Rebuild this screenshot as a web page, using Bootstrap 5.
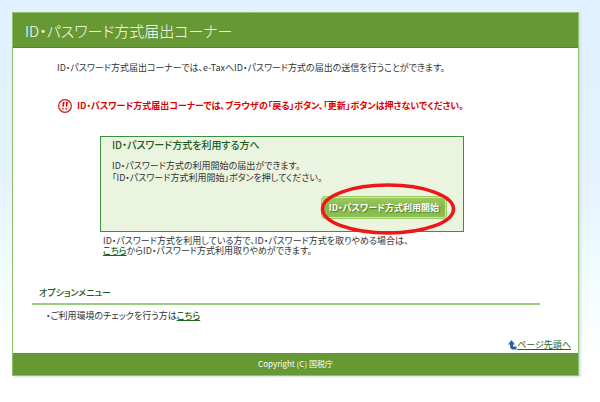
<!DOCTYPE html>
<html lang="ja">
<head>
<meta charset="utf-8">
<meta name="viewport" content="width=device-width, initial-scale=1">
<title>ID・パスワード方式届出コーナー</title>
<link href="https://cdn.jsdelivr.net/npm/bootstrap@5.3.0/dist/css/bootstrap.min.css" rel="stylesheet">
<style>
body {
  font-family: "Noto Sans CJK JP", sans-serif;
  font-feature-settings: "palt";
  font-size: 9px;
  line-height: 12px;
  color: #333;
  background: linear-gradient(#e1f1ff, #e4f3ff 180px, #f0fcff 270px, #fff 360px) no-repeat #fff;
}
.sheet { margin: 12px 21px 24px 12px; border: 1px solid #8fc16c; box-shadow: 2px 1px 2px #d8dfee; }
.title-bar { background: #693; border-bottom: 1px solid #4f8f1f; padding: 8px 12px 6px; }
.title-bar h1 { font-size: 15px; line-height: 20px; font-weight: 300; }
.intro { padding: 14px 0 0 44px; }
.notice { padding: 24px 0 0 44px; color: #d00; font-weight: 700; }
.notice-icon { width: 16px; height: 16px; }
.guide { margin: 22px 114px 0 87px; }
.panel-green { background: #eaf4df; border: 1px solid #3c9141; padding: 1px 16px 12px 11px; }
.panel-green h2 { font-size: 10px; line-height: 14px; font-weight: 500; color: #1c5c1f; }
.start-wrap { margin-top: 12px; }
.start { font-size: 9px; line-height: 15px; font-weight: 700; font-feature-settings: inherit; color: #fff; padding: 3px 7px; border: 1px solid #9acb5c; border-radius: 4px; background: linear-gradient(#a0cb62, #84b84a 50%, #8fc159); box-shadow: inset 0 0 0 1px #cde9a4; text-shadow: 1px 1px 1px #4b7a1c; }
.ring { right: -9px; top: -13px; width: 136px; height: 52px; pointer-events: none; }
.after { padding: 4px 0 0 3px; line-height: 10px; }
.text-link { color: #1c661f; font-weight: 500; }
.options { margin: 31px 38px 0 19px; }
.options h2 { font-size: 9px; line-height: 12px; font-weight: 500; color: #1c5c1f; padding: 0 0 4px 7px; border-bottom: 2px solid #9ace7e; }
.options ul { padding: 5px 0 0 14px; }
.to-top { padding: 17px 7px 2px 0; }
.foot { background: #693; font-size: 8px; line-height: 22px; }
</style>
<script src="https://cdn.jsdelivr.net/npm/bootstrap@5.3.0/dist/js/bootstrap.bundle.min.js"></script>
</head>
<body>
<div class="sheet bg-white" id="top">
  <header class="title-bar text-white"><h1 class="m-0">ID・パスワード方式届出コーナー</h1></header>
  <main>
    <p class="intro m-0">ID・パスワード方式届出コーナーでは、e-TaxへID・パスワード方式の届出の送信を行うことができます。</p>
    <p class="notice d-flex align-items-center gap-1 m-0">
      <svg class="notice-icon flex-shrink-0" viewBox="0 0 16 16" aria-hidden="true"><circle cx="8" cy="8" r="6.400" fill="#eee" stroke="#c22" stroke-width="1.200"/><path d="M5.800 4h1.800l-.9 4.800H5.500zM9.100 4h1.800L10 8.800H8.800zM5.200 10h1.400v1.500H5.200zM8.500 10h1.400v1.500H8.500z" fill="#d00"/></svg>
      <span>ID・パスワード方式届出コーナーでは、ブラウザの「戻る」ボタン、「更新」ボタンは押さないでください。</span>
    </p>
    <section class="guide">
      <div class="panel-green">
        <h2 class="mb-2">ID・パスワード方式を利用する方へ</h2>
        <p class="m-0">ID・パスワード方式の利用開始の届出ができます。<br>「ID・パスワード方式利用開始」ボタンを押してください。</p>
        <div class="start-wrap d-flex justify-content-end">
          <div class="position-relative">
            <button type="button" class="start d-block">ID・パスワード方式利用開始</button>
            <svg class="ring position-absolute" viewBox="0 0 136 52" aria-hidden="true"><ellipse cx="68" cy="26" rx="65.500" ry="24" fill="none" stroke="#ec1818" stroke-width="3.500"/></svg>
          </div>
        </div>
      </div>
      <p class="after m-0">ID・パスワード方式を利用している方で、ID・パスワード方式を取りやめる場合は、<br><a class="text-link" href="#">こちら</a>からID・パスワード方式利用取りやめができます。</p>
    </section>
    <section class="options">
      <h2 class="m-0">オプションメニュー</h2>
      <ul class="list-unstyled m-0"><li>・ご利用環境のチェックを行う方は<a class="text-link" href="#">こちら</a></li></ul>
    </section>
    <div class="to-top d-flex justify-content-end align-items-center">
      <svg width="9" height="10" viewBox="0 0 9 10" aria-hidden="true"><path d="M3.500 0 7 4.500H5V6.500h3.500v3H4Q2 9 2 4.500H0z" fill="#2f5fa5"/></svg>
      <a class="text-link fw-normal" href="#top">ページ先頭へ</a>
    </div>
  </main>
  <footer class="foot text-white text-center">Copyright (C) 国税庁</footer>
</div>
</body>
</html>
